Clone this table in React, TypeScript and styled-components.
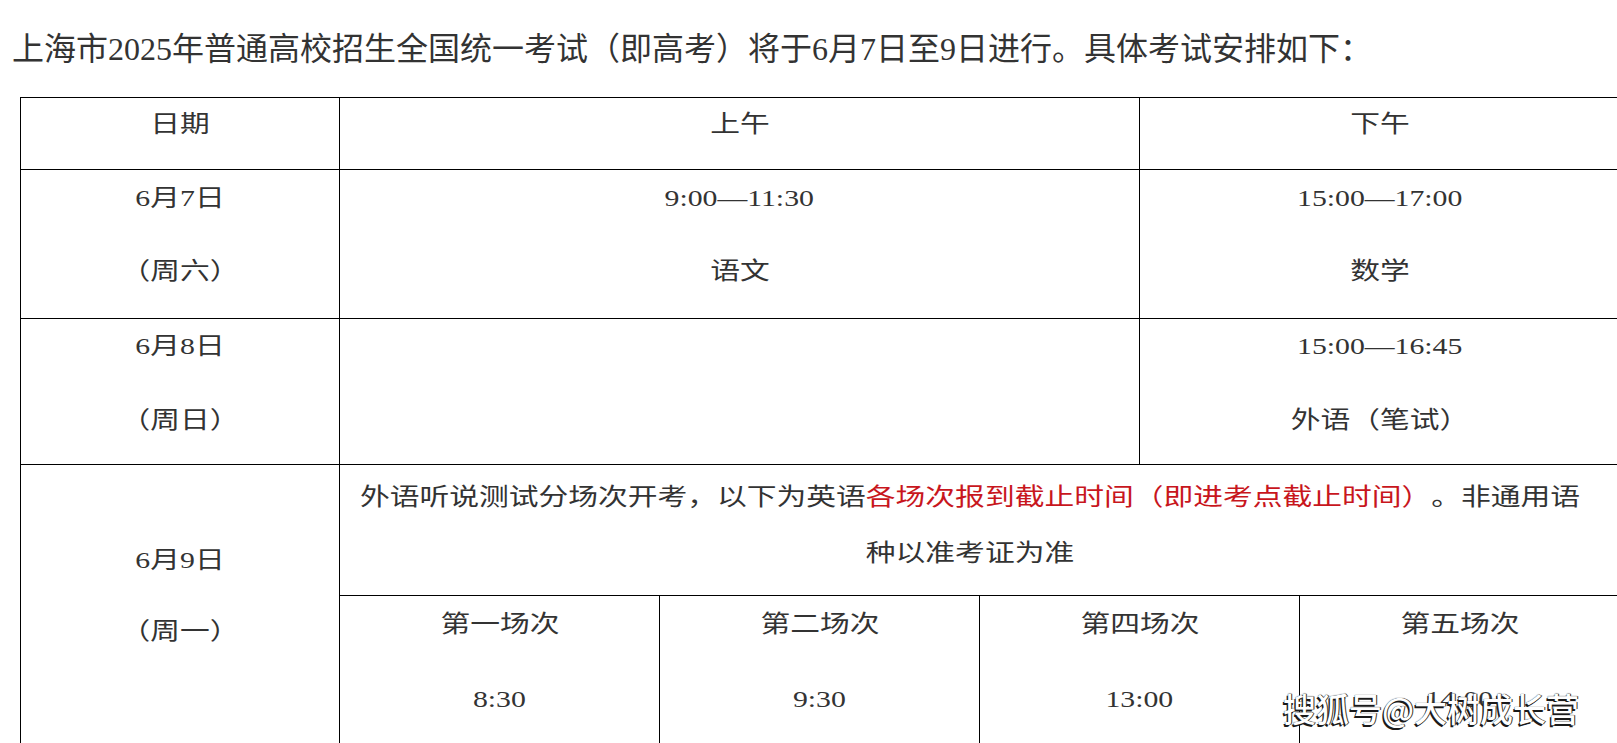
import React from "react";
import styled, { createGlobalStyle } from "styled-components";

const GlobalStyle = createGlobalStyle`
  html, body {
    margin: 0;
    padding: 0;
    overflow: hidden;
    background: #fff;
  }
  body {
    font-family: "Liberation Serif", "Noto Sans CJK SC", serif;
    color: #333;
    text-spacing-trim: space-all;
  }
`;

const Page = styled.div`
  position: relative;
  width: 1617px;
  height: 743px;
  overflow: hidden;
  background: #fff;
`;

const Title = styled.p`
  margin: 0;
  padding: 29px 0 0 12px;
  font-size: 32px;
  line-height: 40px;
  color: #333;
  white-space: nowrap;
`;

const TableWrap = styled.div`
  padding: 28px 0 0 20px;
`;

const Table = styled.table`
  border-collapse: collapse;
  table-layout: fixed;
  width: 1599px;
  font-size: 24px;
  color: #333;
`;

const Row = styled.tr<{ $h: number }>`
  height: ${(p) => p.$h}px;
`;

const Cell = styled.td<{ $pt?: number; $gap?: number }>`
  border: 1px solid #000;
  padding: ${(p) => p.$pt ?? 7}px 8px 0;
  vertical-align: top;
  text-align: center;
  --gap: ${(p) => p.$gap ?? 34}px;
`;

const Notice = styled.td`
  border: 1px solid #000;
  padding: 4px 36px 0 16px;
  vertical-align: top;
  text-align: center;
  line-height: 56px;
`;

const Line = styled.div`
  line-height: 40px;
  white-space: nowrap;
  & + & {
    margin-top: var(--gap);
  }
`;

const Wide = styled.span`
  display: inline-block;
  transform: scaleX(1.24);
  white-space: nowrap;
`;

const Mark = styled.span`
  color: #c8161d;
`;

const Watermark = styled.div`
  position: absolute;
  right: 38px;
  top: 688px;
  font-family: "Noto Sans CJK SC", "Noto Sans", sans-serif;
  font-size: 33px;
  line-height: 40px;
  font-weight: 500;
  color: #fff;
  white-space: nowrap;
  text-shadow: -1.5px 1.5px 0 #1a1a1a, 0 0 1px #000, 1px 0 0 #444;
`;

type Two = [string, string];

const TwoLines: React.FC<{ lines: Two }> = ({ lines }) => (
  <>
    <Line>
      <Wide>{lines[0]}</Wide>
    </Line>
    <Line>
      <Wide>{lines[1]}</Wide>
    </Line>
  </>
);

const sessions: Two[] = [
  ["第一场次", "8:30"],
  ["第二场次", "9:30"],
  ["第四场次", "13:00"],
  ["第五场次", "14:00"],
];

export default function App() {
  return (
    <Page>
      <GlobalStyle />
      <Title>
        上海市2025年普通高校招生全国统一考试（即高考）将于6月7日至9日进行。具体考试安排如下：
      </Title>
      <TableWrap>
        <Table>
          <colgroup>
            <col style={{ width: 319 }} />
            {Array.from({ length: 8 }).map((_, i) => (
              <col key={i} style={{ width: 160 }} />
            ))}
          </colgroup>
          <tbody>
            <Row $h={72}>
              <Cell $pt={6}>
                <Line>
                  <Wide>日期</Wide>
                </Line>
              </Cell>
              <Cell $pt={6} colSpan={5}>
                <Line>
                  <Wide>上午</Wide>
                </Line>
              </Cell>
              <Cell $pt={6} colSpan={3}>
                <Line>
                  <Wide>下午</Wide>
                </Line>
              </Cell>
            </Row>
            <Row $h={149}>
              <Cell $pt={8} $gap={33}>
                <TwoLines lines={["6月7日", "（周六）"]} />
              </Cell>
              <Cell $pt={8} $gap={33} colSpan={5}>
                <TwoLines lines={["9:00—11:30", "语文"]} />
              </Cell>
              <Cell $pt={8} $gap={33} colSpan={3}>
                <TwoLines lines={["15:00—17:00", "数学"]} />
              </Cell>
            </Row>
            <Row $h={146}>
              <Cell $pt={7} $gap={34}>
                <TwoLines lines={["6月8日", "（周日）"]} />
              </Cell>
              <Cell colSpan={5} />
              <Cell $pt={7} $gap={34} colSpan={3}>
                <TwoLines lines={["15:00—16:45", "外语（笔试）"]} />
              </Cell>
            </Row>
            <Row $h={131}>
              <Cell $pt={75} $gap={31} rowSpan={2}>
                <TwoLines lines={["6月9日", "（周一）"]} />
              </Cell>
              <Notice colSpan={8}>
                <Wide>
                  外语听说测试分场次开考，以下为英语
                  <Mark>各场次报到截止时间（即进考点截止时间）</Mark>
                  。非通用语
                  <br />
                  种以准考证为准
                </Wide>
              </Notice>
            </Row>
            <Row $h={170}>
              {sessions.map((s) => (
                <Cell key={s[0]} $pt={8} $gap={35} colSpan={2}>
                  <TwoLines lines={s} />
                </Cell>
              ))}
            </Row>
          </tbody>
        </Table>
      </TableWrap>
      <Watermark>搜狐号@大树成长营</Watermark>
    </Page>
  );
}
